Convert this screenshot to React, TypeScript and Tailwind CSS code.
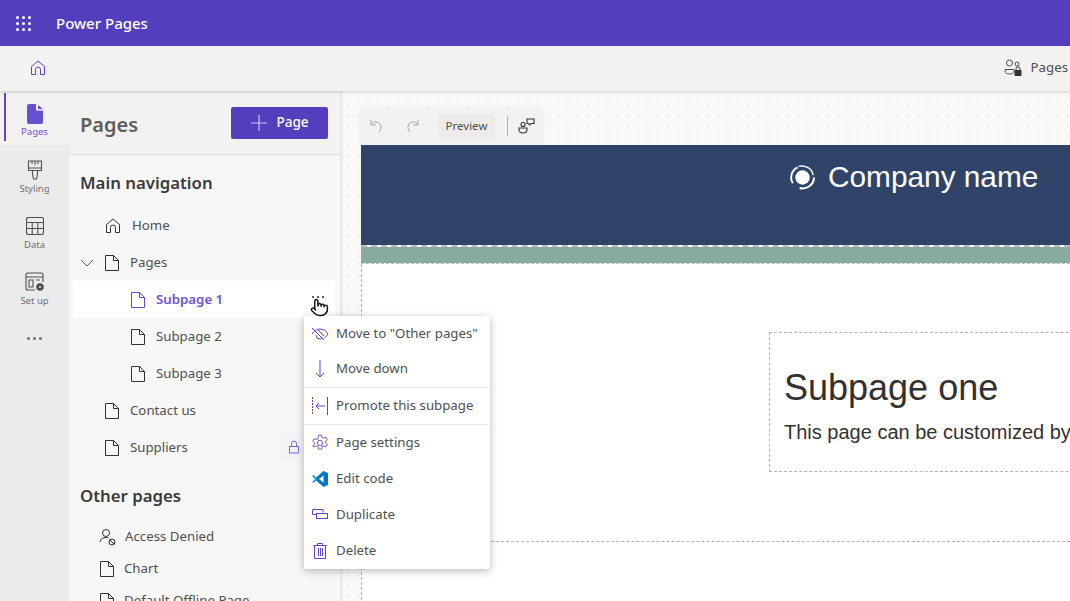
import type { ReactNode } from 'react'
import { Pointer } from 'lucide-react'

function Doc({ className = 'text-[#323130]' }: { className?: string }) {
  return (
    <svg width="16" height="18" viewBox="0 0 16 18" fill="none" stroke="currentColor" strokeWidth="1" className={className}>
      <path d="M1.500 1.500h8l5 5v10h-13z" />
      <path d="M9.500 1.500v5h5" />
    </svg>
  )
}

function HomeIcon({ className = '' }: { className?: string }) {
  return (
    <svg width="16" height="16" viewBox="0 0 16 16" fill="none" stroke="currentColor" strokeWidth="1" className={className}>
      <path d="M1.500 6.500 8 1l6.500 5.500v8h-4V9.500a2.500 2.500 0 0 0-5 0v5h-4z" strokeLinejoin="round" />
    </svg>
  )
}

function RailItem({ label, icon }: { label: string; icon: ReactNode }) {
  return (
    <div className="flex h-14 flex-col items-center justify-start pt-[15px] text-[#707070]">
      <div className="flex h-5 items-center justify-center">{icon}</div>
      <span className="mt-[3px] text-[9.500px] leading-[12px]">{label}</span>
    </div>
  )
}

function TreeRow({ label, indent, active, chevron, lock, home }: { label: string; indent: string; active?: boolean; chevron?: boolean; lock?: boolean; home?: boolean }) {
  return (
    <div className={`relative flex h-[37px] items-center mr-[5px] ${indent} ${active ? 'bg-white' : ''}`}>
      {chevron && (
        <svg width="14" height="14" viewBox="0 0 14 14" fill="none" stroke="#605e5c" strokeWidth="1" className="absolute left-[7px] top-[12px]">
          <path d="M1 4l6 6 6-6" />
        </svg>
      )}
      {home ? <HomeIcon className="mx-px text-[#323130]" /> : <Doc className={active ? 'text-[#5f4bd0]' : 'text-[#323130]'} />}
      <span className={`ml-[10px] text-[13.250px] ${active ? 'font-semibold text-[#6a55d3]' : 'text-[#505050]'}`}>{label}</span>
      {lock && (
        <div className="absolute left-[206px] top-[3px] flex h-[30px] w-[30px] items-center justify-center bg-[#f3f2f6]">
          <svg width="14" height="16" viewBox="0 0 14 16" fill="none" stroke="#7a68dc" strokeWidth="1">
            <rect x="2.500" y="7.500" width="9" height="6.500" />
            <path d="M4.500 7.500V4.500a2.500 2.500 0 0 1 5 0v3" />
          </svg>
        </div>
      )}
    </div>
  )
}

function MenuItem({ icon, label, h = 'h-9' }: { icon: ReactNode; label: string; h?: string }) {
  return (
    <div className={`flex items-center ${h} pl-[7px]`}>
      <div className="flex w-[18px] items-center justify-center">{icon}</div>
      <span className="ml-[7px] text-[13.250px] text-[#505050]">{label}</span>
    </div>
  )
}

export default function App() {
  const purple = '#5b46c9'
  return (
    <div className="flex h-[601px] w-[1070px] flex-col overflow-hidden bg-white font-['Noto_Sans','Open_Sans',sans-serif]">
      {/* top bar */}
      <header className="flex h-[46px] items-center bg-[#533ebd] text-white">
        <div className="ml-[16px] grid grid-cols-3 gap-x-[3px] gap-y-[3px]">
          {Array.from({ length: 9 }).map((_, i) => (
            <span key={i} className="h-[3px] w-[3px] rounded-full bg-white" />
          ))}
        </div>
        <span className="ml-[25px] text-[15px] font-medium">Power Pages</span>
      </header>

      {/* command bar */}
      <div className="z-10 flex h-[45px] items-center justify-between bg-[#f3f2f1] pb-[2px] pl-[30px] shadow-[0_1px_3px_rgba(0,0,0,0.18)]">
        <HomeIcon className="text-[#5b46c9]" />
        <div className="flex items-center">
          <svg width="20" height="20" viewBox="0 0 20 20" fill="none" stroke="#505050" strokeWidth="1">
            <circle cx="6.500" cy="5" r="3" />
            <circle cx="14" cy="6" r="2" />
            <path d="M2 11.500h9v1.500c0 2-2 3-4.500 3S2 15 2 13z" />
            <rect x="11.500" y="12" width="7" height="6" rx="1" fill="#323130" stroke="none" />
            <path d="M13 12v-1.200a2 2 0 0 1 4 0V12" stroke="#323130" />
          </svg>
          <span className="ml-[8px] mr-[2px] whitespace-nowrap text-[13.250px] text-[#505050]">Pages</span>
        </div>
      </div>

      <div className="flex min-h-0 flex-1">
        {/* rail */}
        <nav className="flex w-[69px] shrink-0 flex-col bg-[#ebebeb]">
          <div className="relative flex h-[54px] flex-col items-center bg-[#f3f2f1] pt-[13px]">
            <span className="absolute left-[4px] top-[2px] h-[48px] w-[2px] bg-[#5b46c9]" />
            <svg width="16" height="20" viewBox="0 0 16 20">
              <path d="M2 0h7v6.500h7V18a2 2 0 0 1-2 2H2a2 2 0 0 1-2-2V2a2 2 0 0 1 2-2z" fill="#6550cf" />
              <path d="M11 1l5 4h-5z" fill="#6550cf" />
            </svg>
            <span className="mt-[2px] text-[9.500px] leading-[12px] text-[#6a55d3]">Pages</span>
          </div>
          <RailItem
            label="Styling"
            icon={
              <svg width="16" height="20" viewBox="0 0 16 20" fill="none" stroke="#505050" strokeWidth="1.100">
                <path d="M1.500 1h13v9.500h-13zM5 1v3M8 1v4M11 1v3M1.500 8h13" />
                <path d="M5.500 10.500v3.500l1 5h3l1-5v-3.500" />
              </svg>
            }
          />
          <RailItem
            label="Data"
            icon={
              <svg width="18" height="18" viewBox="0 0 18 18" fill="none" stroke="#505050" strokeWidth="1.100">
                <rect x="0.500" y="0.500" width="17" height="17" rx="2" />
                <path d="M0.500 5.500h17M0.500 11.500h17M6.200 5.500v12M11.800 5.500v12" />
              </svg>
            }
          />
          <RailItem
            label="Set up"
            icon={
              <svg width="20" height="20" viewBox="0 0 20 20" fill="none" stroke="#505050" strokeWidth="1.100">
                <path d="M10 18H3a2 2 0 0 1-2-2V3a2 2 0 0 1 2-2h13a2 2 0 0 1 2 2v7" />
                <path d="M1 5h17M4 8h4v7H4zM11 8h4" />
                <circle cx="15" cy="15" r="3.200" fill="#505050" />
                <circle cx="15" cy="15" r="1" fill="#ebebeb" stroke="none" />
              </svg>
            }
          />
          <div className="mt-[24px] flex justify-center gap-[3px]">
            <span className="h-[3px] w-[3px] rounded-full bg-[#707070]" />
            <span className="h-[3px] w-[3px] rounded-full bg-[#707070]" />
            <span className="h-[3px] w-[3px] rounded-full bg-[#707070]" />
          </div>
        </nav>

        {/* pages panel */}
        <aside className="flex w-[271px] shrink-0 flex-col overflow-hidden bg-[#f7f7f7]">
          <div className="flex h-[64px] shrink-0 items-center justify-between border-b border-[#e1dfdd] bg-[#f3f2f1] pl-[11px] pr-[12px]">
            <span className="pt-[4px] text-[20px] font-semibold text-[#605e5c]">Pages</span>
            <button className="flex h-[32px] w-[97px] items-center justify-center rounded-[2px] bg-[#533ebd] text-[13.500px] font-medium text-white">
              <svg width="18" height="18" viewBox="0 0 18 18" stroke="#c9c2ee" strokeWidth="1.200" className="mr-[8px]">
                <path d="M9 1v16M1 9h16" />
              </svg>
              Page
            </button>
          </div>
          <div className="pl-[4px]">
            <h2 className="mt-[12px] h-[32px] pl-[7px] text-[16.800px] font-semibold leading-[32px] text-[#3b3a39]">Main navigation</h2>
            <div className="mt-[8px]">
              <TreeRow label="Home" indent="pl-[31px]" home />
              <TreeRow label="Pages" indent="pl-[31px]" chevron />
              <TreeRow label="Subpage 1" indent="pl-[57px]" active />
              <TreeRow label="Subpage 2" indent="pl-[57px]" />
              <TreeRow label="Subpage 3" indent="pl-[57px]" />
              <TreeRow label="Contact us" indent="pl-[31px]" />
              <TreeRow label="Suppliers" indent="pl-[31px]" lock />
            </div>
            <h2 className="mt-[14px] h-[32px] pl-[7px] text-[16.800px] font-semibold leading-[32px] text-[#3b3a39]">Other pages</h2>
            <div className="mt-[9px] pl-[26px]">
              <div className="flex h-[32px] items-center">
                <svg width="18" height="18" viewBox="0 0 18 18" fill="none" stroke="#323130" strokeWidth="1">
                  <circle cx="7" cy="5" r="3.500" />
                  <path d="M1 14c.5-3 2.500-4.500 6-4.500 1 0 2 .2 2.500.5" />
                  <circle cx="13" cy="14" r="3" />
                  <path d="M11 12l4 4" />
                </svg>
                <span className="ml-[8px] text-[13.250px] text-[#505050]">Access Denied</span>
              </div>
              <div className="flex h-[32px] items-center">
                <Doc />
                <span className="ml-[9px] text-[13.250px] text-[#505050]">Chart</span>
              </div>
              <div className="flex h-[32px] items-center">
                <Doc />
                <span className="ml-[9px] text-[13.250px] text-[#505050]">Default Offline Page</span>
              </div>
            </div>
          </div>
        </aside>

        {/* canvas */}
        <main className="relative min-w-0 flex-1 border-l-[3px] border-[#ebebeb] bg-[#faf9f8] bg-[radial-gradient(#eeecea_1px,transparent_1px)] bg-[size:10px_10px]">
          <div className="ml-[16px] mt-[16px] flex h-[38px] w-[186px] items-center rounded-t-[6px] bg-[#f3f2f1]">
            <svg width="14" height="14" viewBox="0 0 14 14" fill="none" stroke="#a8a6a4" strokeWidth="1" className="ml-[11px]">
              <path d="M1 1v5h5M1 6c1.500-2.500 3.500-3.500 6-3 3.500.7 5 4.500 3.500 8L9 13" />
            </svg>
            <svg width="14" height="14" viewBox="0 0 14 14" fill="none" stroke="#a8a6a4" strokeWidth="1" className="ml-[21px]">
              <path d="M13 1v5H8M13 6c-1.500-2.500-3.500-3.500-6-3-3.500.7-5 4.500-3.500 8L5 13" />
            </svg>
            <div className="ml-[19px] flex h-[24px] w-[57px] items-center justify-center rounded-[3px] bg-[#edebe9] text-[11.500px] text-[#505050]">Preview</div>
            <span className="ml-[12px] h-[20px] w-px bg-[#b0aeac]" />
            <svg width="18" height="18" viewBox="0 0 18 18" fill="none" stroke="#323130" strokeWidth="1.100" className="ml-[10px]">
              <circle cx="5" cy="7.500" r="2" />
              <path d="M1 11h8v1.500c0 2-1.500 3.500-4 3.500s-4-1.500-4-3.500z" />
              <path d="M9 2h7v4.500h-3l-1.500 1.500-1-1.500H9z" />
            </svg>
          </div>

          <div className="ml-[18px] flex h-full flex-col bg-white">
            <div className="h-[100px] shrink-0 bg-[#2f4468]">
              <div className="flex h-[65px] items-center pl-[428px] font-['Liberation_Sans',sans-serif] text-[29.800px] text-white">
                <svg width="27" height="27" viewBox="0 0 28 28" fill="none" className="mr-[12px]">
                  <circle cx="14" cy="14" r="7.500" fill="white" />
                  <path d="M4 20A11.500 11.500 0 0 1 9 3.500" stroke="white" strokeWidth="2" />
                  <path d="M10 2.500c7-1.500 14 2 15 9" stroke="white" strokeWidth="1.500" />
                  <path d="M26 14a12 12 0 0 1-15 11" stroke="white" strokeWidth="2.200" />
                </svg>
                Company name
              </div>
            </div>
            <div className="h-[19px] shrink-0 border-t-2 border-b border-dashed border-[#bdbdbd] bg-[#87aba1] bg-clip-padding" />
            <div className="flex h-[278px] shrink-0 items-start border-b border-l border-dashed border-[#b5b5b5] pl-[407px] pt-[68px]">
              <div className="h-[140px] w-[400px] shrink-0 border border-dashed border-[#b5b5b5] pl-[14px] pt-[34px] font-['Liberation_Sans',sans-serif] text-[#323130]">
                <h1 className="text-[36px] leading-[42px]">Subpage one</h1>
                <p className="mt-[11px] whitespace-nowrap text-[20px] leading-[24px]">This page can be customized by</p>
              </div>
            </div>
            <div className="flex-1 border-l border-dashed border-[#b5b5b5]" />
          </div>
        </main>
      </div>

      {/* row actions, hand cursor */}
      <div className="absolute left-[312px] top-[296px] flex gap-[3px]">
        <span className="h-[2px] w-[2px] bg-[#605e5c]" />
        <span className="h-[2px] w-[2px] bg-[#605e5c]" />
        <span className="h-[2px] w-[2px] bg-[#605e5c]" />
      </div>
      <Pointer size={19} fill="white" stroke="#111" strokeWidth={1.800} className="absolute left-[310px] top-[298px] z-30" />

      {/* context menu */}
      <div className="absolute left-[304px] top-[316px] z-20 w-[186px] rounded-[2px] bg-white shadow-[0_2px_8px_rgba(0,0,0,0.28)]">
        <MenuItem
          h="h-[35px]"
          label={'Move to "Other pages"'}
          icon={
            <svg width="18" height="16" viewBox="0 0 18 16" fill="none" stroke={purple} strokeWidth="1">
              <path d="M1 8c2-3.500 5-5 8-5s6 1.500 8 5c-1 1.700-2.200 3-3.500 3.800" />
              <path d="M1 2l12 12M5 9a4 4 0 0 0 4 4c1 0 2-.3 3-1M7 4l6 6" />
            </svg>
          }
        />
        <MenuItem
          label="Move down"
          icon={
            <svg width="12" height="18" viewBox="0 0 12 18" fill="none" stroke={purple} strokeWidth="1">
              <path d="M6 0v17M2 13l4 4 4-4" />
            </svg>
          }
        />
        <div className="border-t border-[#edebe9]">
          <MenuItem
            label="Promote this subpage"
            icon={
              <svg width="16" height="18" viewBox="0 0 16 18" fill="none" stroke={purple} strokeWidth="1">
                <path d="M.5 0v18" strokeDasharray="2 1" />
                <path d="M15.500 0v18M13 9H4M7 6 4 9l3 3" />
              </svg>
            }
          />
        </div>
        <div className="border-t border-[#edebe9]">
          <MenuItem
            label="Page settings"
            icon={
              <svg width="18" height="18" viewBox="0 0 18 18" fill="none" stroke="#6f5cd6" strokeWidth="1">
                <circle cx="9" cy="9" r="2.700" />
                <path d="M7.500 1h3l.5 2.300 1.700.8 2.200-1 1.400 2.500-1.700 1.500v1.800l1.700 1.500-1.400 2.500-2.200-1-1.700.8-.5 2.300h-3l-.5-2.300-1.700-.8-2.200 1L1.700 11.900l1.700-1.500V8.600L1.700 7.100l1.400-2.500 2.200 1 1.700-.8z" />
              </svg>
            }
          />
          <MenuItem
            label="Edit code"
            icon={
              <svg width="16" height="16" viewBox="0 0 16 16">
                <path d="M11.500 0 16 2v12l-4.500 2L3.500 9V7z" fill="#0078c8" />
                <path d="M11.500 4.500v7L7 8z" fill="#fff" />
                <path d="M1.500 4 0 5l3 3-3 3 1.500 1L5 9V7z" fill="#1e9ce8" />
              </svg>
            }
          />
          <MenuItem
            label="Duplicate"
            icon={
              <svg width="16" height="12" viewBox="0 0 16 12" fill="none" stroke={purple} strokeWidth="1">
                <path d="M11 3.500V.5H.5v5H4" />
                <rect x="4.500" y="4.500" width="11" height="5" />
              </svg>
            }
          />
          <MenuItem
            label="Delete"
            icon={
              <svg width="14" height="18" viewBox="0 0 14 18" fill="none" stroke={purple} strokeWidth="1">
                <path d="M.5 3.500h13M4.500 3.500v-2h5v2M1.500 3.500v13h11v-13M5.500 6v8M7.500 6v8M9.500 6v8" />
              </svg>
            }
          />
        </div>
      </div>
    </div>
  )
}
